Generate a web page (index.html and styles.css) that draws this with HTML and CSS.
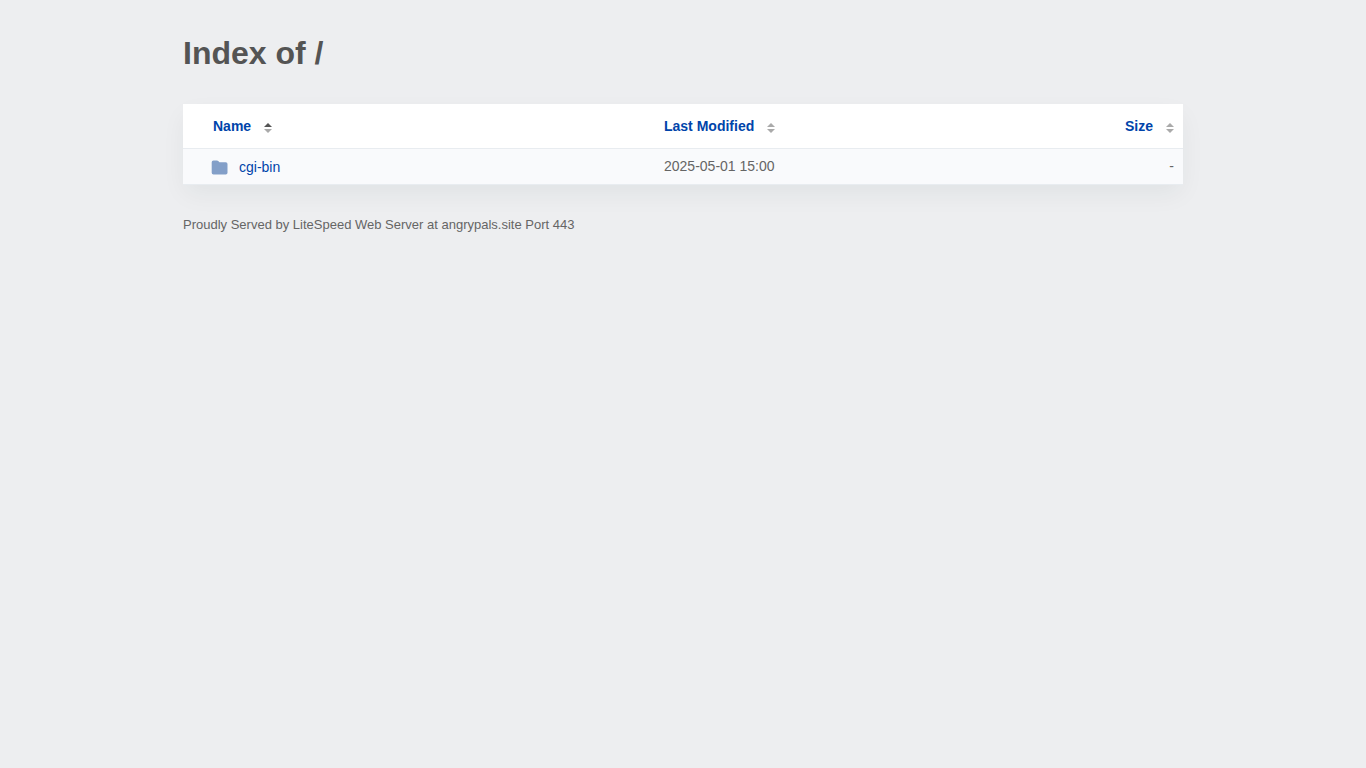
FILE: index.html
```html
<!DOCTYPE html>
<html lang="en">
<head>
  <meta charset="UTF-8">
  <meta name="viewport" content="width=device-width, initial-scale=1.0">
  <title>Index of /</title>
  <link rel="stylesheet" href="styles.css">
</head>
<body>
  <div class="content">
    <h1>Index of /</h1>
    <table>
      <thead>
        <tr>
          <th class="name"><a href="#">Name<svg class="sort asc" viewBox="0 0 8 10"><path class="up" d="M0 4L4 0L8 4Z"/><path class="down" d="M0 6L4 10L8 6Z"/></svg></a></th>
          <th class="modified"><a href="#">Last Modified<svg class="sort" viewBox="0 0 8 10"><path class="up" d="M0 4L4 0L8 4Z"/><path class="down" d="M0 6L4 10L8 6Z"/></svg></a></th>
          <th class="size"><a href="#">Size<svg class="sort" viewBox="0 0 8 10"><path class="up" d="M0 4L4 0L8 4Z"/><path class="down" d="M0 6L4 10L8 6Z"/></svg></a></th>
        </tr>
      </thead>
      <tbody>
        <tr>
          <td class="name"><a href="cgi-bin/"><svg class="folder" viewBox="0 0 17 15"><path d="M2.500 0.500H6Q6.700 0.500 7.200 1L8.500 2.300H14.700Q16.500 2.300 16.500 4V12.700Q16.500 14.500 14.700 14.500H2.500Q0.700 14.500 0.700 12.700V2.300Q0.700 0.500 2.500 0.500Z"/></svg>cgi-bin</a></td>
          <td class="modified">2025-05-01 15:00</td>
          <td class="size">-</td>
        </tr>
      </tbody>
    </table>
    <footer>Proudly Served by LiteSpeed Web Server at angrypals.site Port 443</footer>
  </div>
</body>
</html>
```

FILE: styles.css
```css
body {
  margin: 0;
  background: #edeef0;
  color: #545454;
  font-family: "Liberation Sans", Arial, sans-serif;
  font-size: 14px;
  line-height: 20px;
}
.content {
  max-width: 1000px;
  margin: 0 auto;
  padding: 32px 20px;
}
h1 {
  margin: 0 0 30px;
  font-size: 32px;
  line-height: 42px;
}
a {
  color: #0044aa;
  text-decoration: none;
}
table {
  width: 100%;
  border-collapse: collapse;
  table-layout: fixed;
  background: #fff;
  box-shadow: 0 10px 24px -2px rgba(0, 50, 50, 0.06);
}
th,
td {
  padding: 7px 9px 8px 10px;
  text-align: left;
  border-bottom: 1px solid #e8ecf0;
}
th {
  padding: 12px 9px 12px 10px;
}
td {
  background: #f9fafc;
  color: #656565;
}
.name {
  width: 432px;
  padding-left: 30px;
}
td.name {
  padding: 8px 9px 7px 28px;
}
.size {
  width: 80px;
  text-align: right;
}
td a {
  display: flex;
  align-items: center;
}
.sort {
  width: 8px;
  height: 10px;
  margin-left: 13px;
  vertical-align: -2px;
  fill: #aaa;
}
.asc .up {
  fill: #545454;
}
.folder {
  width: 17px;
  height: 15px;
  margin-right: 11px;
  fill: #839fc8;
}
footer {
  margin-top: 30px;
  font-size: 13px;
  color: #656565;
}
```
